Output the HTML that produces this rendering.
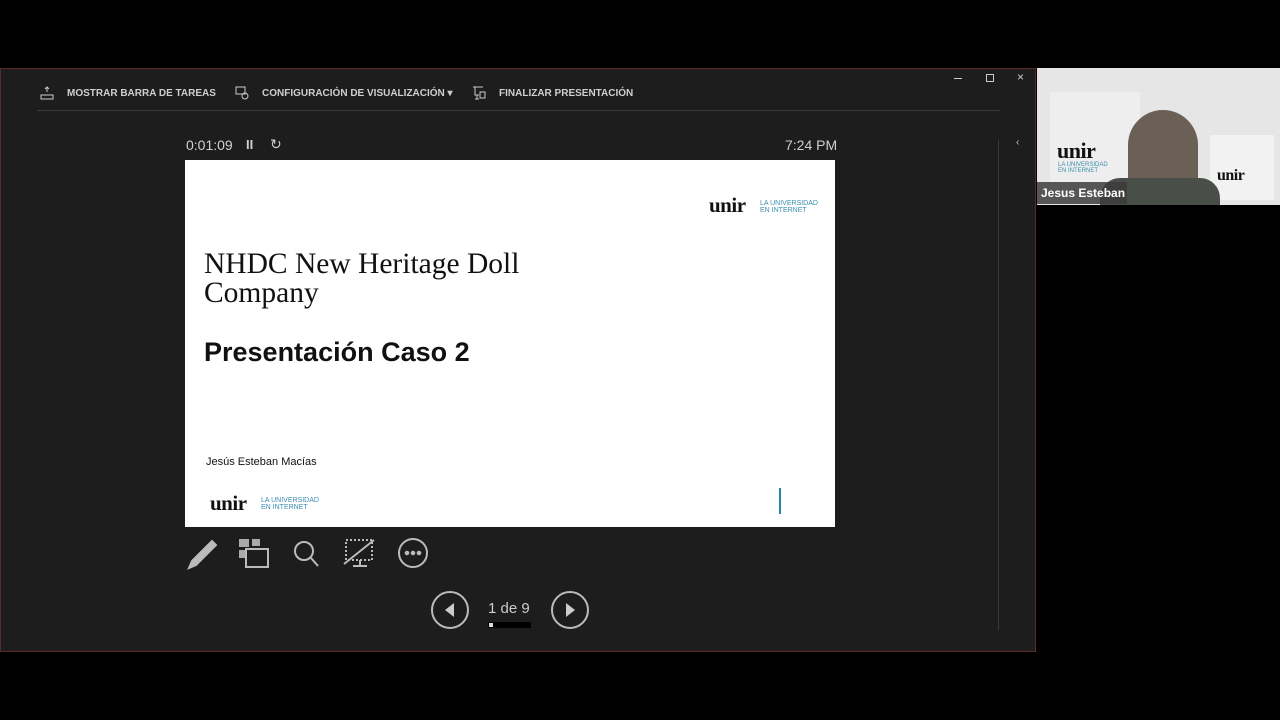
<!DOCTYPE html><html><head><meta charset="utf-8"><style>
body{margin:0;width:1280px;height:720px;background:#000;position:relative;overflow:hidden;font-family:"Liberation Sans",sans-serif}
.a{position:absolute}
.win{left:0;top:68px;width:1034px;height:582px;background:#1d1d1d;border:1px solid #5a2a2a}
.tb{color:#cfcfcf;font-size:10px;font-weight:bold;top:88px}
.slide{left:185px;top:160px;width:650px;height:367px;background:#fff}
.unir{font-family:"Liberation Serif",serif;font-weight:bold;color:#111;letter-spacing:-0.5px}
.tag{color:#3a8fb0;font-size:7px;line-height:7px}
</style></head><body>
<div class="a win"></div>
<div class="a" style="left:37px;top:110px;width:963px;height:1px;background:#3a3a3a"></div>
<div class="a" style="left:998px;top:140px;width:1px;height:490px;background:#3a3a3a"></div>
<svg class="a" style="left:40px;top:86px" width="14" height="14"><path d="M7 1v5M5 3l2-2 2 2M1 9h12v4H1z" stroke="#ccc" fill="none"/></svg>
<div class="a tb" style="left:67px">MOSTRAR BARRA DE TAREAS</div>
<svg class="a" style="left:235px;top:86px" width="14" height="14"><rect x="1" y="1" width="9" height="7" stroke="#ccc" fill="none"/><circle cx="10" cy="10" r="3" stroke="#ccc" fill="none"/></svg>
<div class="a tb" style="left:262px">CONFIGURACIÓN DE VISUALIZACIÓN ▾</div>
<svg class="a" style="left:472px;top:86px" width="14" height="14"><path d="M1 1h10M3 1v8h4M5 9v4M3 13h4" stroke="#ccc" fill="none"/><rect x="8" y="6" width="5" height="6" stroke="#ccc" fill="none"/></svg>
<div class="a tb" style="left:499px">FINALIZAR PRESENTACIÓN</div>
<div class="a" style="left:954px;top:78px;width:8px;height:1px;background:#ccc"></div>
<div class="a" style="left:986px;top:74px;width:6px;height:6px;border:1px solid #ccc"></div>
<div class="a" style="left:1017px;top:70px;color:#ccc;font-size:12px">×</div>
<div class="a" style="left:1016px;top:137px;color:#ccc;font-size:10px">‹</div>
<div class="a" style="left:186px;top:137px;color:#d0d0d0;font-size:14px">0:01:09</div>
<div class="a" style="left:246px;top:137px;color:#d0d0d0;font-size:13px;font-weight:bold">II</div>
<div class="a" style="left:270px;top:136px;color:#d0d0d0;font-size:14px">↻</div>
<div class="a" style="left:785px;top:137px;color:#d0d0d0;font-size:14px">7:24 PM</div>
<div class="a slide">
 <div class="a unir" style="left:524px;top:33px;font-size:21px">unir</div>
 <div class="a tag" style="left:575px;top:40px">LA UNIVERSIDAD<br>EN INTERNET</div>
 <div class="a" style="left:19px;top:90px;font-family:'Liberation Serif',serif;font-size:29.5px;line-height:29px;color:#111">NHDC New Heritage Doll<br>Company</div>
 <div class="a" style="left:19px;top:177px;font-size:27px;font-weight:bold;color:#111">Presentación Caso 2</div>
 <div class="a" style="left:21px;top:296px;font-size:11px;color:#111">Jesús Esteban Macías</div>
 <div class="a unir" style="left:25px;top:331px;font-size:21px">unir</div>
 <div class="a tag" style="left:76px;top:337px">LA UNIVERSIDAD<br>EN INTERNET</div>
 <div class="a" style="left:594px;top:328px;width:2px;height:26px;background:#1a8aa8"></div>
</div>
<svg class="a" style="left:186px;top:537px" width="250" height="34" fill="none" stroke="#bbb" stroke-width="2">
<path d="M3 31l3-7 20-20 4 4-20 20z" fill="#bbb"/>
<rect x="53" y="2" width="10" height="8" fill="#aaa" stroke="none"/><rect x="53" y="13" width="8" height="8" fill="#aaa" stroke="none"/><rect x="66" y="2" width="8" height="7" fill="#aaa" stroke="none"/><rect x="60" y="12" width="22" height="18"/>
<circle cx="118" cy="14" r="9"/><path d="M125 21l7 8"/>
<path d="M160 3h26v20h-26z" stroke-dasharray="2 2"/><path d="M158 27l30-24M174 23v6M167 29h14"/>
<circle cx="227" cy="16" r="14"/><circle cx="221" cy="16" r="1.3" fill="#bbb"/><circle cx="227" cy="16" r="1.3" fill="#bbb"/><circle cx="233" cy="16" r="1.3" fill="#bbb"/>
</svg>
<svg class="a" style="left:430px;top:590px" width="40" height="40"><circle cx="20" cy="20" r="18" stroke="#bbb" stroke-width="2" fill="none"/><path d="M24 13v14l-9-7z" fill="#ccc"/></svg>
<svg class="a" style="left:550px;top:590px" width="40" height="40"><circle cx="20" cy="20" r="18" stroke="#bbb" stroke-width="2" fill="none"/><path d="M16 13v14l9-7z" fill="#ccc"/></svg>
<div class="a" style="left:488px;top:600px;color:#ccc;font-size:15px">1 de 9</div>
<div class="a" style="left:488px;top:622px;width:43px;height:6px;background:#000"></div>
<div class="a" style="left:489px;top:623px;width:4px;height:4px;background:#ddd"></div>
<div class="a" style="left:1037px;top:68px;width:243px;height:137px;background:#e6e6e6"></div>
<div class="a" style="left:1050px;top:92px;width:90px;height:90px;background:#eeeeee"></div>
<div class="a" style="left:1210px;top:135px;width:64px;height:65px;background:#f2f2f2"></div>
<div class="a unir" style="left:1057px;top:138px;font-size:22px">unir</div>
<div class="a tag" style="left:1058px;top:162px;font-size:6px;line-height:6px">LA UNIVERSIDAD<br>EN INTERNET</div>
<div class="a unir" style="left:1217px;top:167px;font-size:16px">unir</div>
<div class="a" style="left:1128px;top:110px;width:70px;height:95px;background:#6a6055;border-radius:35px 35px 10px 10px"></div>
<div class="a" style="left:1100px;top:178px;width:120px;height:27px;background:#4a4e48;border-radius:20px 20px 0 0"></div>
<div class="a" style="left:1037px;top:182px;width:86px;height:22px;background:rgba(60,60,60,.85);color:#fff;font-size:12px;font-weight:bold;line-height:22px;padding-left:4px">Jesus Esteban</div>
</body></html>
